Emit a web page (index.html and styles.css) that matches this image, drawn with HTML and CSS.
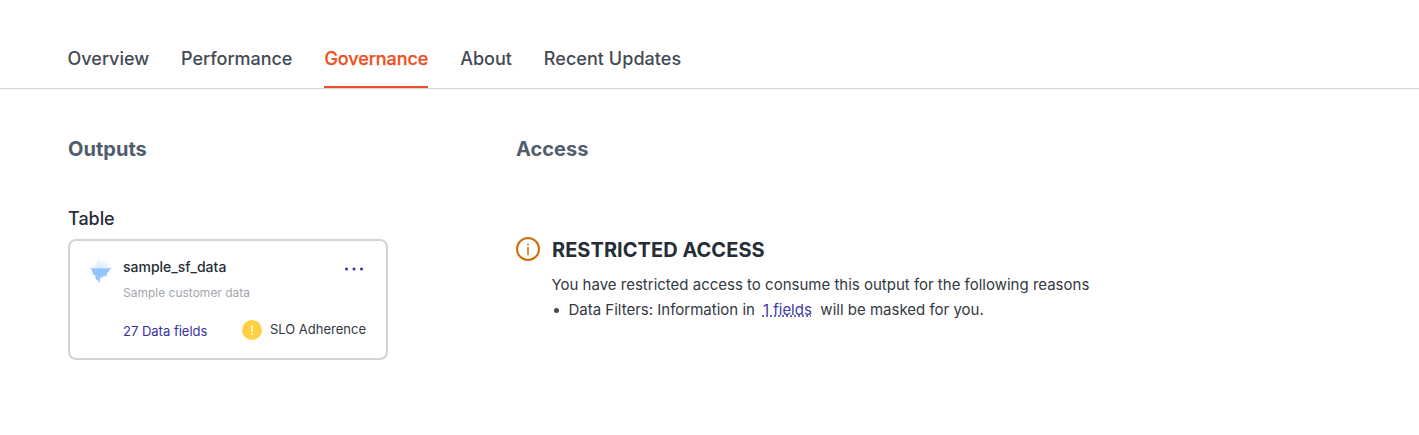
FILE: index.html
```html
<!DOCTYPE html>
<html lang="en">
<head>
<meta charset="utf-8">
<title>Governance</title>
<link rel="stylesheet" href="styles.css">
</head>
<body>
<nav class="tabs">
  <a class="tab">Overview</a>
  <a class="tab">Performance</a>
  <a class="tab active">Governance</a>
  <a class="tab">About</a>
  <a class="tab last">Recent Updates</a>
</nav>
<main class="content">
  <section class="outputs">
    <h2 class="heading">Outputs</h2>
    <h3 class="group">Table</h3>
    <article class="card">
      <svg class="berg" width="22" height="26" viewBox="0 0 22 26">
        <path d="M0.500 11 4 7 5.500 6.500 7 3 8.500 0.500 10.500 3 12 4 13.500 2.500 15 5 17 6 21 11Z" fill="#e9f4fe"/>
        <path d="M7 10 8.500 5 10 8 13 7 15 10Z" fill="#dcecfe"/>
        <path d="M1.500 10.500H20.500L18.500 14 17 15 16 19 14 17.500 12 20 10.500 19 9.500 25 7.500 22 6 21.500 5 17 3 16.500Z" fill="#93c5fd"/>
        <path d="M0 10.500H21.500" stroke="#a9d2fe"/>
      </svg>
      <div class="details">
        <div class="top">
          <span class="name">sample_sf_data</span>
          <svg class="more" width="20" height="4" viewBox="0 0 20 4" fill="#3730a3"><circle cx="2.500" cy="2" r="1.500"/><circle cx="10" cy="2" r="1.500"/><circle cx="17.500" cy="2" r="1.500"/></svg>
        </div>
        <div class="desc">Sample customer data</div>
        <div class="bottom">
          <a class="fields">27 Data fields</a>
          <span class="slo"><svg class="warn" width="20" height="20" viewBox="0 0 20 20"><circle cx="10" cy="10" r="10" fill="#ffd043"/><path d="M10 5.300v6.400M10 13v2" stroke="#fff3c9" stroke-width="1.800"/></svg>SLO Adherence</span>
        </div>
      </div>
    </article>
  </section>
  <section class="access">
    <h2 class="heading">Access</h2>
    <div class="notice">
      <svg width="24" height="24" viewBox="0 0 24 24" fill="none" stroke="#d46b08"><circle cx="12" cy="12" r="11" stroke-width="2"/><path d="M12 10v8M12 6.500v2" stroke-width="1.500"/></svg>
      <div>
        <h3 class="title">RESTRICTED ACCESS</h3>
        <p class="reason">You have restricted access to consume this output for the following reasons</p>
        <p class="reason item"><span class="bullet"></span><span>Data Filters: Information in</span><a class="link">1 fields</a><span>will be masked for you.</span></p>
      </div>
    </div>
  </section>
</main>
</body>
</html>
```
FILE: styles.css
```css
* { box-sizing: border-box; }
body { margin: 0; background: #fff; color: #262d36; font-family: Inter, sans-serif; }
h2, h3, p { margin: 0; }
svg { display: block; flex: none; }
.tabs { display: flex; gap: 32px; height: 89px; padding: 44px 67.6px 0; border-bottom: 1px solid #d4d4d4; }
.tab { height: 44px; font-size: 18px; line-height: 30px; font-weight: 500; letter-spacing: -0.03px; color: #434a54; white-space: nowrap; }
.tab.active { color: #f04e23; border-bottom: 2px solid #f04e23; letter-spacing: -0.08px; -webkit-text-stroke: 0.25px currentcolor; }
.tab.last { letter-spacing: 0.05px; }
.content { display: flex; gap: 128px; padding: 45px 68px 0; }
.outputs { width: 320px; flex: none; }
.heading { font-size: 20px; line-height: 30px; font-weight: 700; letter-spacing: 0.03px; color: #505d6d; }
.group { margin-top: 42px; font-size: 18px; line-height: 26px; font-weight: 500; letter-spacing: -0.05px; }
.card { display: flex; gap: 11px; width: 320px; height: 121px; margin-top: 7px; padding: 16px 20px 0; border: 2px solid #d4d4d4; border-radius: 8px; }
.berg { margin-top: 1px; }
.details { flex: 1; }
.top { display: flex; justify-content: space-between; }
.name { font-size: 14px; line-height: 20px; font-weight: 500; }
.more { margin: 10px 2px 0 0; }
.desc { margin-top: 7px; font-size: 12px; line-height: 18px; color: #a3a6ad; }
.bottom { display: flex; justify-content: space-between; margin-top: 17px; font-size: 13px; line-height: 20px; white-space: nowrap; }
.fields { padding-top: 2px; color: #3730a3; }
.slo { display: flex; gap: 8px; color: #30363f; }
.warn { margin-top: 1px; }
.notice { display: flex; gap: 12px; margin-top: 73px; }
.title { font-size: 20px; line-height: 26px; font-weight: 700; letter-spacing: 0.04px; }
.reason { margin: 10px 0 0 -0.5px; font-size: 15px; line-height: 24px; color: #333941; white-space: nowrap; }
.item { display: flex; align-items: center; margin-top: 1px; }
.bullet { width: 5px; height: 5px; margin: 1px 10px 0 2px; border-radius: 50%; background: #434a54; }
.link { margin: 0 8.5px 0 8px; color: #3f3aa8; text-decoration: underline dotted; }
```
